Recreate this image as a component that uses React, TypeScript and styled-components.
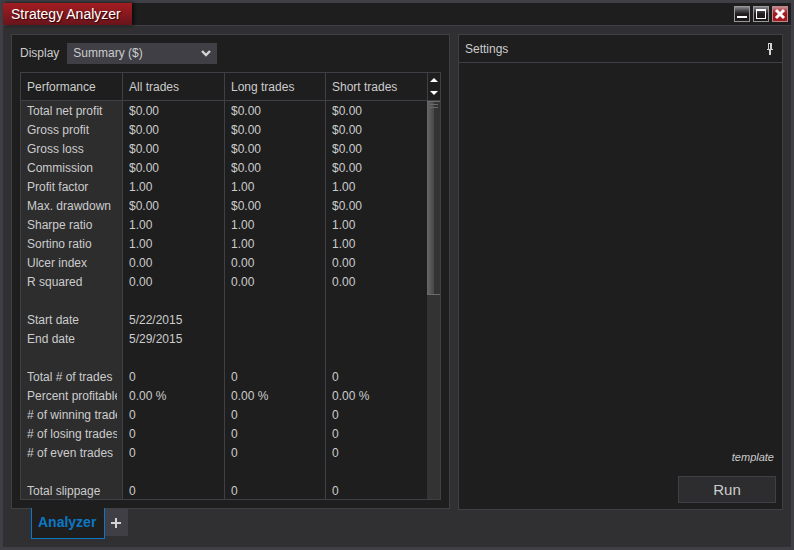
import React from "react";
import styled, { createGlobalStyle } from "styled-components";

const GlobalStyle = createGlobalStyle`
  *, *::before, *::after { box-sizing: border-box; }
  body {
    margin: 0;
    background: #3f3f45;
    color: #cccccc;
    font: 12px/19px "Liberation Sans", Arial, sans-serif;
  }
  button, select { font: inherit; color: inherit; margin: 0; padding: 0; }
`;

const Window = styled.div`
  display: flex;
  flex-direction: column;
  min-height: 100vh;
  border: 3px solid #3f3f45;
  background: #303033;
`;

const TitleBar = styled.header`
  display: flex;
  justify-content: space-between;
  height: 23px;
  background: #1e1e1e;
  border-bottom: 1px solid #3f3f45;
`;

const Title = styled.h1`
  margin: 0;
  padding: 0 11px 0 8px;
  font-size: 14px;
  font-weight: 400;
  line-height: 22px;
  color: #ffffff;
  text-shadow: 1px 1px 1px #300507;
  background: linear-gradient(#a31d22, #68151b);
  box-shadow: 2px 0 3px #0c0c0c;
`;

const WindowControls = styled.div`
  display: flex;
  align-items: center;
  gap: 3px;
  padding-right: 3px;
`;

const ControlButton = styled.button<{ $danger?: boolean }>`
  display: grid;
  place-items: center;
  width: 16px;
  height: 16px;
  border: 1px solid ${(p) => (p.$danger ? "#b98a8d" : "#98989b")};
  background: ${(p) =>
    p.$danger
      ? "linear-gradient(#c98a8d 0, #b04448 25%, #a3191e 50%, #a3191e)"
      : "linear-gradient(#85858a 0, #4b4b4f 25%, #211c1d 50%, #1e1919)"};
  svg { display: block; }
`;

const Workspace = styled.main`
  flex: 1;
  display: grid;
  grid-template-columns: 439fr 325fr;
  gap: 8px;
  padding: 8px;
`;

const LeftColumn = styled.div`
  display: flex;
  flex-direction: column;
  min-width: 0;
`;

const Panel = styled.section`
  flex: 1;
  display: flex;
  flex-direction: column;
  min-width: 0;
  background: #1e1e1e;
  border: 1px solid #3f3f45;
`;

const ReportPanel = styled(Panel)`
  padding: 8px;
`;

const SettingsPanel = styled(Panel)`
  margin-bottom: 29px;
`;

const DisplayRow = styled.div`
  display: flex;
  align-items: center;
  gap: 8px;
  margin-bottom: 8px;
`;

const SelectBox = styled.div`
  display: grid;
  align-items: center;
  width: 150px;
  background: #3f3f45;
  > * { grid-area: 1 / 1; }
  svg { justify-self: end; margin-right: 6px; pointer-events: none; }
`;

const Select = styled.select`
  appearance: none;
  width: 100%;
  height: 21px;
  padding: 0 24px 0 6px;
  border: 0;
  border-radius: 0;
  background: transparent;
`;

const ReportFrame = styled.div`
  flex: 1;
  display: flex;
  border: 1px solid #3f3f45;
  overflow: hidden;
`;

const ReportView = styled.div`
  flex: 1;
  min-width: 0;
  overflow: hidden;
`;

const Report = styled.table`
  width: 100%;
  table-layout: fixed;
  border-collapse: separate;
  border-spacing: 0;
  margin-bottom: -1px;
`;

const Column = styled.col<{ $width?: number }>`
  width: ${(p) => (p.$width ? `${p.$width}px` : "auto")};
`;

const HeadCell = styled.th`
  height: 28px;
  padding: 1px 6px 0;
  border-right: 1px solid #3f3f45;
  border-bottom: 1px solid #3f3f45;
  font-weight: 400;
  text-align: left;
  white-space: nowrap;
  &:last-child { border-right: 0; }
`;

const NameCell = styled.th`
  height: 19px;
  padding: 0 5px 0 6px;
  border-right: 1px solid #3f3f45;
  background: #2d2d2e;
  font-weight: 400;
  text-align: left;
`;

const Clip = styled.div`
  height: 19px;
  line-height: 20px;
  overflow: hidden;
  white-space: nowrap;
`;

const ValueCell = styled.td`
  height: 19px;
  padding: 0 6px;
  border-right: 1px solid #3f3f45;
  &:last-child { border-right: 0; }
`;

const Rail = styled.div`
  display: flex;
  flex-direction: column;
  width: 13px;
`;

const Stepper = styled.div`
  display: grid;
  height: 28px;
  padding: 1px 0;
  border-left: 1px solid #3f3f45;
  border-bottom: 1px solid #3f3f45;
`;

const StepButton = styled.button`
  display: grid;
  place-items: center;
  border: 0;
  background: none;
  svg { display: block; }
`;

const ScrollTrack = styled.div`
  flex: 1;
  background: #333333;
`;

const ScrollThumb = styled.div`
  height: 194px;
  padding: 2px 2px 0 3px;
  border-top: 1px solid #6b6b6b;
  border-bottom: 1px solid #6b6b6b;
  background: linear-gradient(90deg, #686868, #474747 54%, #333333 54%);
  &::before {
    content: "";
    display: block;
    height: 4px;
    border: solid #6b6b6b;
    border-width: 1px 0;
  }
`;

const TabStrip = styled.nav`
  display: flex;
  align-items: flex-start;
  margin-top: -1px;
  padding-left: 20px;
`;

const Tab = styled.button`
  height: 31px;
  padding: 0 8px 2px 6px;
  border: 1px solid #0c78c5;
  border-top: 0;
  background: #1e1e1e;
  color: #0c78c5;
  font-size: 14px;
  font-weight: 700;
`;

const AddTab = styled.button`
  display: grid;
  place-items: center;
  width: 23px;
  height: 27px;
  margin-top: 1px;
  padding-right: 1px;
  border: 0;
  background: #3f3f45;
`;

const SettingsHeader = styled.div`
  display: flex;
  align-items: center;
  justify-content: space-between;
  height: 28px;
  padding: 0 9px 0 6px;
  border-bottom: 1px solid #3f3f45;
`;

const SettingsTitle = styled.h2`
  margin: 0;
  padding-top: 1px;
  font-size: 12px;
  font-weight: 400;
`;

const IconButton = styled.button`
  border: 0;
  background: none;
  svg { display: block; }
`;

const Actions = styled.div`
  display: flex;
  flex-direction: column;
  align-items: flex-end;
  gap: 9px;
  margin-top: auto;
  padding: 0 6px 6px;
`;

const TemplateLink = styled.a`
  margin-right: 2px;
  color: inherit;
  font-size: 11px;
  font-style: italic;
  text-decoration: none;
`;

const RunButton = styled.button`
  width: 98px;
  height: 27px;
  border: 1px solid #3f3f45;
  background: #2d2d30;
  font-size: 15px;
`;

const same = (v: string) => [v, v, v];

const rows: [string, string[]][] = [
  ["Total net profit", same("$0.00")],
  ["Gross profit", same("$0.00")],
  ["Gross loss", same("$0.00")],
  ["Commission", same("$0.00")],
  ["Profit factor", same("1.00")],
  ["Max. drawdown", same("$0.00")],
  ["Sharpe ratio", same("1.00")],
  ["Sortino ratio", same("1.00")],
  ["Ulcer index", same("0.00")],
  ["R squared", same("0.00")],
  ["", same("")],
  ["Start date", ["5/22/2015", "", ""]],
  ["End date", ["5/29/2015", "", ""]],
  ["", same("")],
  ["Total # of trades", same("0")],
  ["Percent profitable", same("0.00 %")],
  ["# of winning trades", same("0")],
  ["# of losing trades", same("0")],
  ["# of even trades", same("0")],
  ["", same("")],
  ["Total slippage", same("0")],
];

export default function App() {
  return (
    <>
      <GlobalStyle />
      <Window>
        <TitleBar>
          <Title>Strategy Analyzer</Title>
          <WindowControls>
            <ControlButton aria-label="Minimize">
              <svg width="14" height="14"><path d="M2 9h10v2H2z" fill="#fff" /></svg>
            </ControlButton>
            <ControlButton aria-label="Maximize">
              <svg width="14" height="14">
                <path d="M2 2h10v10H2zM3 4v7h8V4z" fill="#fff" fillRule="evenodd" />
              </svg>
            </ControlButton>
            <ControlButton $danger aria-label="Close">
              <svg width="14" height="14"><path d="M3 3l8 8M11 3l-8 8" stroke="#fff" strokeWidth="3" /></svg>
            </ControlButton>
          </WindowControls>
        </TitleBar>

        <Workspace>
          <LeftColumn>
            <ReportPanel>
              <DisplayRow>
                <label htmlFor="display">Display</label>
                <SelectBox>
                  <Select id="display" defaultValue="summary">
                    <option value="summary">Summary ($)</option>
                  </Select>
                  <svg width="10" height="8">
                    <path d="M1 1l4 4 4-4" fill="none" stroke="#d4d4d4" strokeWidth="2.4" />
                  </svg>
                </SelectBox>
              </DisplayRow>

              <ReportFrame>
                <ReportView>
                  <Report>
                    <colgroup>
                      <Column $width={102} />
                      <Column $width={102} />
                      <Column $width={101} />
                      <Column />
                    </colgroup>
                    <thead>
                      <tr>
                        {["Performance", "All trades", "Long trades", "Short trades"].map((h) => (
                          <HeadCell key={h} scope="col">{h}</HeadCell>
                        ))}
                      </tr>
                    </thead>
                    <tbody>
                      {rows.map(([name, values], i) => (
                        <tr key={i}>
                          <NameCell scope="row"><Clip>{name}</Clip></NameCell>
                          {values.map((v, j) => (
                            <ValueCell key={j}><Clip>{v}</Clip></ValueCell>
                          ))}
                        </tr>
                      ))}
                    </tbody>
                  </Report>
                </ReportView>
                <Rail>
                  <Stepper>
                    <StepButton aria-label="Previous">
                      <svg width="8" height="4"><path d="M0 4l4-4 4 4z" fill="#fff" /></svg>
                    </StepButton>
                    <StepButton aria-label="Next">
                      <svg width="8" height="4"><path d="M0 0l4 4 4-4z" fill="#fff" /></svg>
                    </StepButton>
                  </Stepper>
                  <ScrollTrack><ScrollThumb /></ScrollTrack>
                </Rail>
              </ReportFrame>
            </ReportPanel>

            <TabStrip>
              <Tab>Analyzer</Tab>
              <AddTab aria-label="Add tab">
                <svg width="10" height="10">
                  <path d="M4 0h2v4h4v2H6v4H4V6H0V4h4z" fill="#d4d4d4" />
                </svg>
              </AddTab>
            </TabStrip>
          </LeftColumn>

          <SettingsPanel>
            <SettingsHeader>
              <SettingsTitle>Settings</SettingsTitle>
              <IconButton aria-label="Pin">
                <svg width="6" height="12" shapeRendering="crispEdges">
                  <path d="M1 0h4v6h1v1H4v5H2V7H0V6h1zM2 1v5h1V1z" fill="#d4d4d4" fillRule="evenodd" />
                </svg>
              </IconButton>
            </SettingsHeader>
            <Actions>
              <TemplateLink href="#template">template</TemplateLink>
              <RunButton>Run</RunButton>
            </Actions>
          </SettingsPanel>
        </Workspace>
      </Window>
    </>
  );
}
